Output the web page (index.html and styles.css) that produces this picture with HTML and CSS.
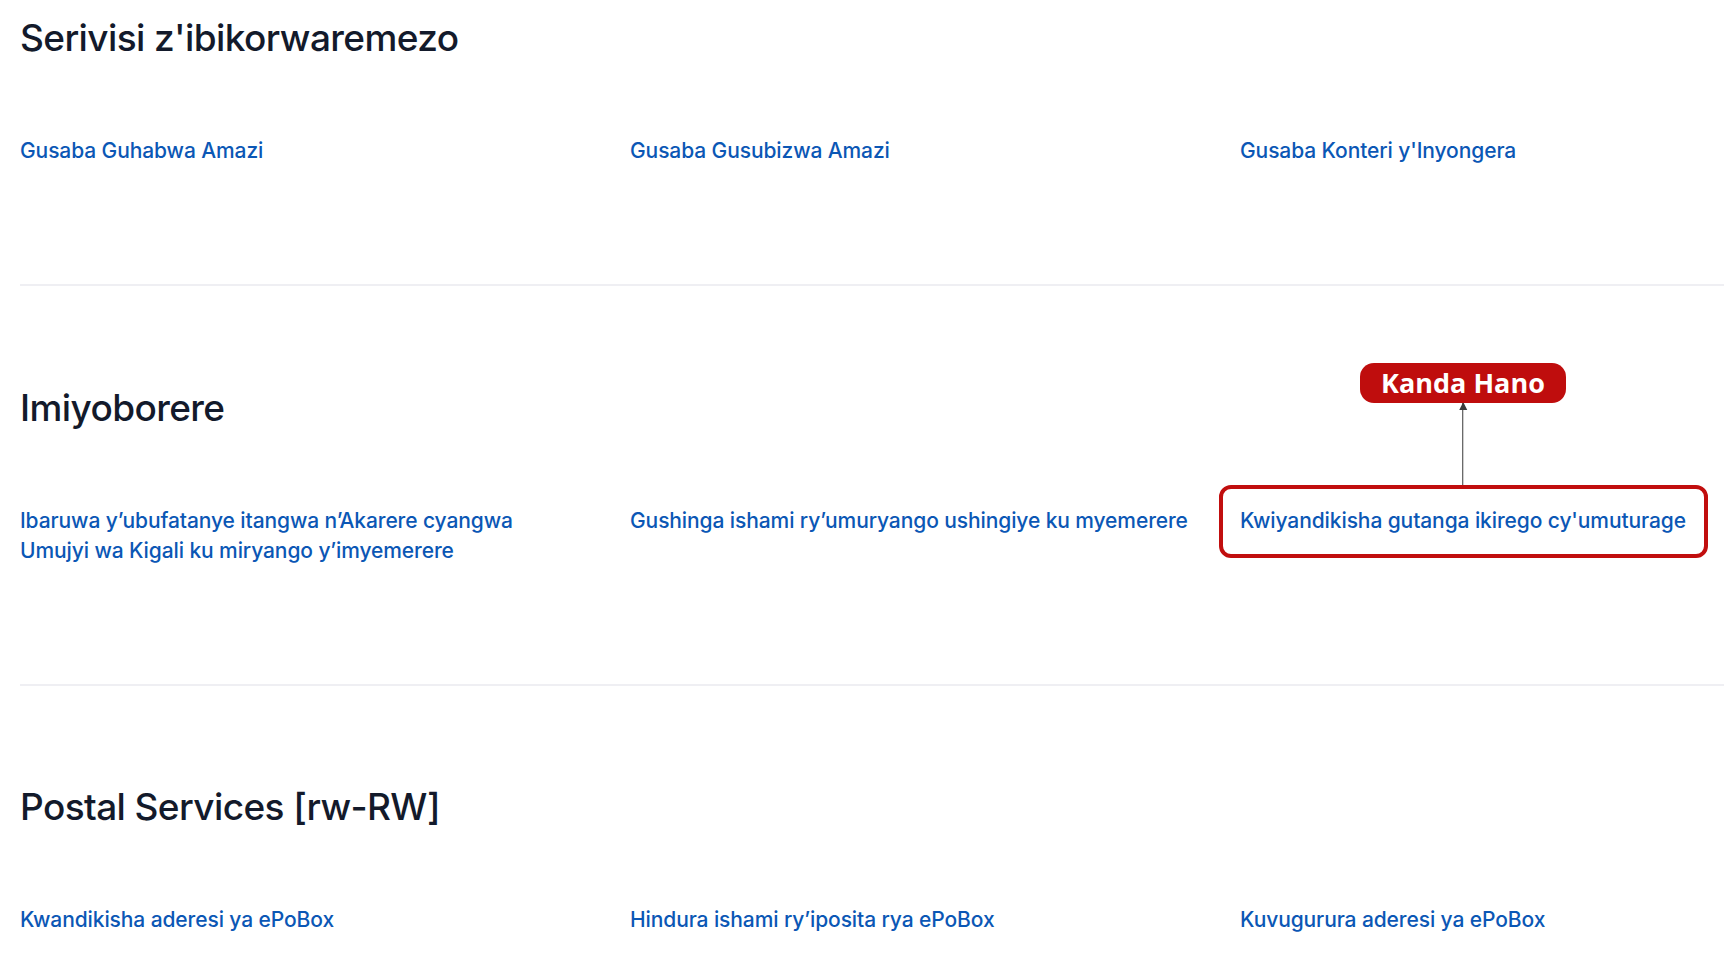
FILE: index.html
```html
<!DOCTYPE html>
<html lang="rw">
<head>
<meta charset="utf-8">
<title>Serivisi</title>
<link rel="stylesheet" href="styles.css">
</head>
<body>
<main class="page">
  <section class="group group-first">
    <h2 class="group-title">Serivisi z'ibikorwaremezo</h2>
    <ul class="links">
      <li><a href="#">Gusaba Guhabwa Amazi</a></li>
      <li><a href="#">Gusaba Gusubizwa Amazi</a></li>
      <li><a href="#">Gusaba Konteri y'Inyongera</a></li>
    </ul>
  </section>
  <section class="group">
    <h2 class="group-title">Imiyoborere</h2>
    <ul class="links">
      <li><a href="#">Ibaruwa y’ubufatanye itangwa n’Akarere cyangwa Umujyi wa Kigali ku miryango y’imyemerere</a></li>
      <li><a href="#">Gushinga ishami ry’umuryango ushingiye ku myemerere</a></li>
      <li>
        <span class="callout">
          <a href="#">Kwiyandikisha gutanga ikirego cy'umuturage</a>
          <span class="callout-frame"></span>
          <span class="callout-arrow"></span>
          <span class="callout-badge">Kanda Hano</span>
        </span>
      </li>
    </ul>
  </section>
  <section class="group group-last">
    <h2 class="group-title">Postal Services [rw-RW]</h2>
    <ul class="links">
      <li><a href="#">Kwandikisha aderesi ya ePoBox</a></li>
      <li><a href="#">Hindura ishami ry’iposita rya ePoBox</a></li>
      <li><a href="#">Kuvugurura aderesi ya ePoBox</a></li>
    </ul>
  </section>
</main>
</body>
</html>
```

FILE: styles.css
```css
html, body {
  margin: 0;
  padding: 0;
  background: #ffffff;
}

body {
  font-family: Inter, "Noto Sans", "Liberation Sans", sans-serif;
  overflow: hidden;
}

.page {
  padding-left: 20px;
  width: 1900px;
}

.group {
  padding: 99px 0 118px;
  border-bottom: 2px solid #efeff3;
}

.group-first {
  padding-top: 15px;
}

.group-last {
  padding-top: 98px;
  border-bottom: none;
}

.group-title {
  margin: 0 0 75px;
  font-size: 37px;
  line-height: 46px;
  font-weight: 500;
  color: #131a2b;
  letter-spacing: -0.6px;
}

.links {
  list-style: none;
  margin: 0;
  padding: 0;
  display: grid;
  grid-template-columns: repeat(3, 566px);
  column-gap: 44px;
  font-size: 21px;
  line-height: 30px;
  font-weight: 500;
  letter-spacing: -0.1px;
}

.links a {
  color: #0b57b5;
  text-decoration: none;
}

.callout {
  position: relative;
  display: inline-block;
  vertical-align: top;
}

.callout-frame {
  position: absolute;
  top: -21px;
  bottom: -22px;
  left: -21px;
  right: -22px;
  border: 4px solid #c10e0e;
  border-radius: 12px;
}

.callout-arrow {
  position: absolute;
  left: 50%;
  top: -103px;
  height: 82px;
  width: 1.5px;
  background: #3a3a3a;
  transform: translateX(-50%);
}

.callout-arrow::before {
  content: "";
  position: absolute;
  top: -1px;
  left: 50%;
  transform: translateX(-50%);
  border-left: 4px solid transparent;
  border-right: 4px solid transparent;
  border-bottom: 8px solid #3a3a3a;
}

.callout-badge {
  position: absolute;
  left: 50%;
  top: -143px;
  transform: translateX(-50%);
  width: 206px;
  height: 40px;
  box-sizing: border-box;
  background: #bf0d0d;
  border-radius: 14px;
  color: #ffffff;
  font-family: "Open Sans", "Noto Sans", sans-serif;
  font-weight: 700;
  font-size: 27px;
  line-height: 40px;
  letter-spacing: 0;
  text-align: center;
  white-space: nowrap;
}
```
